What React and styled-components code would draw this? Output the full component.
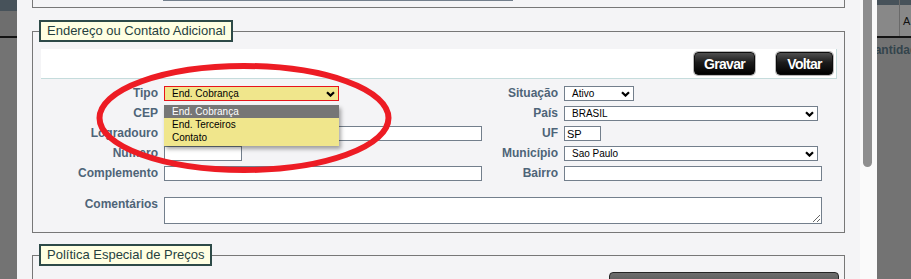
import React from "react";
import styled, { createGlobalStyle } from "styled-components";

const Global = createGlobalStyle`
  html, body { margin: 0; padding: 0; }
  body {
    width: 911px; height: 279px; overflow: hidden;
    background: #737373;
    font-family: "Liberation Sans", Arial, sans-serif;
  }
`;

const FONT = `"Liberation Sans", Arial, sans-serif`;

const Page = styled.div`
  display: flex;
  width: 911px;
  height: 279px;
  overflow: hidden;
`;

/* ---------- dimmed page behind the dialog ---------- */
const Backdrop = styled.div`
  flex: none;
  width: ${(p) => p.$w}px;
  display: flex;
  flex-direction: column;
  background: #737373;
  overflow: hidden;
`;
const BackBand = styled.div`
  flex: none;
  height: ${(p) => p.$h}px;
  background: #47525a;
  display: flex;
`;
const BackHeader = styled.div`
  flex: none;
  height: ${(p) => p.$h}px;
  background: ${(p) => p.$bg};
  display: flex;
`;
const BackCell = styled.div`
  flex: none;
  width: ${(p) => p.$w}px;
  border-right: ${(p) => (p.$div ? "1px solid #6a6a6a" : "none")};
  display: flex;
  align-items: center;
  padding-left: ${(p) => p.$pl || 0}px;
  font: 11px ${FONT};
  color: #111;
  white-space: nowrap;
`;
const BackRule = styled.div`
  flex: none;
  height: 2px;
  background: #141414;
`;
const BackText = styled.div`
  margin: 5px 0 0 -19px;
  font: bold 12px ${FONT};
  color: #33444c;
  white-space: nowrap;
`;

/* ---------- dialog ---------- */
const Modal = styled.div`
  flex: none;
  width: 843px;
  background: #f4f4f6;
  overflow: hidden;
`;
const ModalInner = styled.div`
  display: flex;
  flex-direction: column;
  padding: 0 15px;
  margin-top: -25px;
`;
const ScrollTrack = styled.div`
  flex: none;
  width: 17px;
  box-sizing: border-box;
  padding-left: 3px;
  background: #fafafa;
`;
const Thumb = styled.div`
  width: 9px;
  height: 167px;
  background: #8f8f8f;
  border-radius: 0 0 5px 5px;
`;

const Fieldset = styled.fieldset`
  position: relative;
  margin: ${(p) => p.$mt || 0}px 0 0 0;
  padding: ${(p) => p.$pad};
  border: 1px solid #777;
  min-width: 0;
`;
const Legend = styled.legend`
  box-sizing: border-box;
  height: 22px;
  margin-left: -2px;
  padding: 0 5px 0 6px;
  border: 2px solid #2d4a48;
  background: #ffffe2;
  color: #263f3f;
  font: 13px/18px ${FONT};
  white-space: nowrap;
`;

const TopInput = styled.div`
  box-sizing: border-box;
  width: 350px;
  height: 20px;
  margin-left: 122px;
  border: 1px solid #737f8c;
  background: #fff;
`;

const ActionBar = styled.div`
  display: flex;
  justify-content: flex-end;
  gap: 21px;
  box-sizing: border-box;
  height: 30px;
  padding: 3px 3px 0 0;
  background: #fff;
  border-bottom: 1px solid #c5dcdc;
  border-right: 1px solid #c5dcdc;
`;
const DarkButton = styled.button`
  box-sizing: border-box;
  flex: none;
  width: ${(p) => p.$w}px;
  height: 23px;
  margin: 0;
  padding: 0;
  border: 1px solid #0d0d0d;
  border-radius: 4px;
  background: linear-gradient(#505050 0%, #1c1c1c 45%, #000 100%);
  box-shadow: 0 0 0 1px #b9b9b9;
  color: #fff;
  font: bold 14px ${FONT};
  letter-spacing: -0.7px;
`;

const Form = styled.div`
  position: relative;
  display: grid;
  grid-template-columns: 117px 318px 70px 1fr;
  grid-template-rows: repeat(5, 15px) auto;
  column-gap: 6px;
  row-gap: 5px;
  margin-top: 7px;
`;
const Label = styled.div`
  text-align: right;
  font: bold 12px/15px ${FONT};
  color: #4e6478;
  white-space: nowrap;
  align-self: start;
  margin-top: ${(p) => p.$mt || 0}px;
`;
const Cell = styled.div`
  display: flex;
  align-items: center;
  position: relative;
  grid-column: ${(p) => p.$span || "auto"};
  margin-top: ${(p) => p.$mt || 0}px;
`;
const SelectBox = styled.div`
  position: relative;
  box-sizing: border-box;
  width: ${(p) => p.$w}px;
  height: 15px;
  display: flex;
  align-items: center;
  justify-content: space-between;
  padding: 0 3px 0 7px;
  border: 1px solid ${(p) => (p.$active ? "#e8141b" : "#737f8c")};
  background: ${(p) => (p.$active ? "#f0e68c" : "#fff")};
  font: 10px ${FONT};
  color: #000;
  white-space: nowrap;
`;
const TextInput = styled.input`
  box-sizing: border-box;
  width: ${(p) => p.$w}px;
  height: 15px;
  margin: 0;
  padding: 0 2px;
  border: 1px solid #737f8c;
  background: #fff;
  font: 11px ${FONT};
  color: #000;
  outline: none;
`;
const TextArea = styled.textarea`
  display: block;
  box-sizing: border-box;
  width: 658px;
  height: 27px;
  margin: 0;
  padding: 1px 2px;
  border: 1px solid #737f8c;
  background: #fff;
  font: 11px ${FONT};
  outline: none;
`;

const ListBox = styled.div`
  position: absolute;
  left: -1px;
  top: 18px;
  z-index: 5;
  width: 175px;
  box-sizing: border-box;
  padding: 0 0 2px;
  background: #f0e68c;
  box-shadow: 2px 3px 4px rgba(0, 0, 0, 0.35);
`;
const Option = styled.div`
  height: 13px;
  padding-left: 8px;
  font: 10px/13px ${FONT};
  color: ${(p) => (p.$sel ? "#fff" : "#000")};
  background: ${(p) => (p.$sel ? "#767676" : "transparent")};
  white-space: nowrap;
`;

const Ellipse = styled.svg`
  position: absolute;
  left: 48px;
  top: -30px;
  z-index: 10;
  pointer-events: none;
`;

const BottomRow = styled.div`
  display: flex;
  justify-content: flex-end;
`;
const GrayButton = styled.button`
  box-sizing: border-box;
  width: 230px;
  height: 26px;
  margin: 0;
  padding: 1px 0 0;
  border: 1px solid #252525;
  border-radius: 4px;
  background: linear-gradient(#6e6e6e, #3a3a3a);
  color: #fff;
  font: bold 13px/15px ${FONT};
  text-align: center;
  vertical-align: top;
`;

const Chevron = () => (
  <svg width="9" height="6" viewBox="0 0 9 6">
    <path d="M1 1.2 L4.5 4.6 L8 1.2" fill="none" stroke="#000" strokeWidth="2.2" />
  </svg>
);

const Select = ({ w, value, active, children }) => (
  <SelectBox $w={w} $active={active}>
    <span>{value}</span>
    <Chevron />
    {children}
  </SelectBox>
);

export default function App() {
  return (
    <>
      <Global />
      <Page>
        <Backdrop $w={17}>
          <BackBand $h={11} />
          <BackHeader $h={25} $bg="#6e6e6e" />
          <BackRule />
        </Backdrop>

        <Modal>
          <ModalInner>
            <Fieldset $pad="5px 7px 6px 8px">
              <TopInput />
            </Fieldset>

            <Fieldset $mt={12} $pad="7px 7px 8px 8px">
              <Legend>Endereço ou Contato Adicional</Legend>
              <ActionBar>
                <DarkButton $w={61}>Gravar</DarkButton>
                <DarkButton $w={57}>Voltar</DarkButton>
              </ActionBar>

              <Form>
                <Label>Tipo</Label>
                <Cell>
                  <Select w={175} value="End. Cobrança" active>
                    <ListBox>
                      <Option $sel>End. Cobrança</Option>
                      <Option>End. Terceiros</Option>
                      <Option>Contato</Option>
                    </ListBox>
                  </Select>
                </Cell>
                <Label>Situação</Label>
                <Cell>
                  <Select w={70} value="Ativo" />
                </Cell>

                <Label>CEP</Label>
                <Cell>
                  <TextInput $w={80} readOnly />
                </Cell>
                <Label>País</Label>
                <Cell>
                  <Select w={254} value="BRASIL" />
                </Cell>

                <Label>Logradouro</Label>
                <Cell>
                  <TextInput $w={318} readOnly />
                </Cell>
                <Label>UF</Label>
                <Cell>
                  <TextInput $w={37} readOnly defaultValue="SP" />
                </Cell>

                <Label>Numero</Label>
                <Cell>
                  <TextInput $w={78} readOnly />
                </Cell>
                <Label>Município</Label>
                <Cell>
                  <Select w={254} value="Sao Paulo" />
                </Cell>

                <Label>Complemento</Label>
                <Cell>
                  <TextInput $w={318} readOnly />
                </Cell>
                <Label>Bairro</Label>
                <Cell>
                  <TextInput $w={258} readOnly />
                </Cell>

                <Label $mt={11}>Comentários</Label>
                <Cell $span="2 / 5" $mt={11}>
                  <TextArea readOnly />
                </Cell>

                <Ellipse width="310" height="124" viewBox="0 0 310 124">
                  <ellipse cx="155" cy="62" rx="144.5" ry="52" fill="none" stroke="#ed1c24" strokeWidth="6" />
                </Ellipse>
              </Form>
            </Fieldset>

            <Fieldset $mt={11} $pad="6px 5px 0 8px">
              <Legend>Política Especial de Preços</Legend>
              <BottomRow>
                <GrayButton>Adicionar Nova Política Especial</GrayButton>
              </BottomRow>
            </Fieldset>
          </ModalInner>
        </Modal>

        <ScrollTrack>
          <Thumb />
        </ScrollTrack>

        <Backdrop $w={34}>
          <BackBand $h={5}>
            <BackCell $w={22} $div />
          </BackBand>
          <BackHeader $h={31} $bg="#888888">
            <BackCell $w={22} $div />
            <BackCell $w={11} $pl={3}>A</BackCell>
          </BackHeader>
          <BackRule />
          <BackText>Quantidade</BackText>
        </Backdrop>
      </Page>
    </>
  );
}
